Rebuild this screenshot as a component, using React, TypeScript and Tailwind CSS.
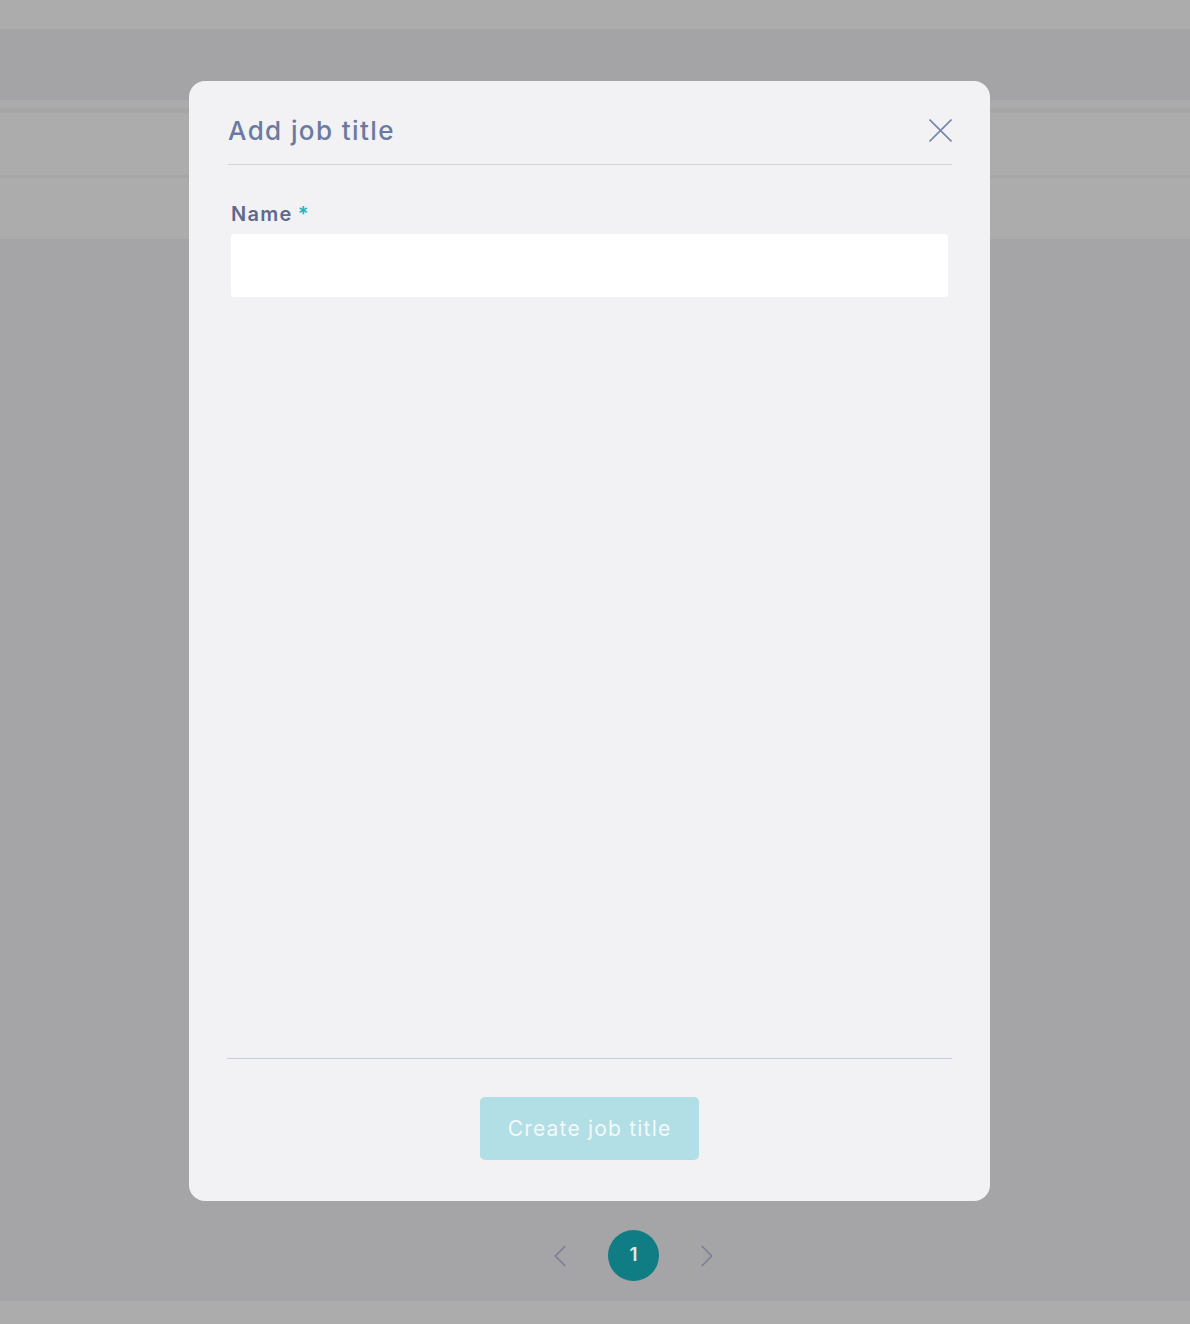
import { ChevronLeft, ChevronRight } from 'lucide-react'

const FONT = { fontFamily: 'Inter, "Open Sans", sans-serif' }

function Pagination() {
  return (
    <div className="flex items-center justify-center gap-[29px] pl-[77px]">
      <ChevronLeft className="h-[38px] w-[38px] text-[#7b7f95]" strokeWidth={1.1} />
      <div className="flex h-[51px] w-[51px] items-center justify-center rounded-full bg-[#107c84] text-[19px] font-semibold text-[#dfe9ea]">
        1
      </div>
      <ChevronRight className="h-[38px] w-[38px] text-[#7b7f95]" strokeWidth={1.1} />
    </div>
  )
}

function CloseIcon() {
  return (
    <svg width="23" height="23" viewBox="0 0 23 23" fill="none" stroke="currentColor" strokeWidth="1.6">
      <path d="M0.5 0.5 L22.5 22.5 M22.5 0.5 L0.5 22.5" />
    </svg>
  )
}

function AddJobTitleModal() {
  return (
    <div className="absolute left-[189px] top-[81px] flex h-[1120px] w-[801px] flex-col rounded-[16px] bg-[#f2f2f4] px-[38px]">
      {/* Header */}
      <div className="ml-[1px] flex h-[84px] items-end justify-between border-b border-[#d2d2da] pb-[14px]">
        <h2 className="text-[26px] font-medium tracking-[1.4px] text-[#6b7aa1]">Add job title</h2>
        <button className="mb-[8px] text-[#7585b0]">
          <CloseIcon />
        </button>
      </div>

      {/* Body */}
      <div className="flex-1 px-[4px] pt-[34px]">
        <label className="block text-[20px] font-semibold tracking-[1.3px] text-[#5f6a8a]">
          Name<span className="ml-[5px] text-[#21b4c0]">*</span>
        </label>
        <input className="mt-[5px] h-[63px] w-[717px] rounded-[3px] bg-white px-3 text-[16px] outline-none" />
      </div>

      {/* Footer */}
      <div className="flex h-[143px] items-start justify-center border-t border-[#c9cde0] pt-[38px]">
        <button className="h-[63px] w-[219px] rounded-[5px] bg-[#b1dfe5] text-[21px] font-normal tracking-[1.2px] text-[#f3f9fa]">
          Create job title
        </button>
      </div>
    </div>
  )
}

export default function App() {
  return (
    <div className="relative h-[1324px] w-full overflow-hidden bg-[#a5a5a7]" style={FONT}>
      <div className="h-[29px] bg-[#acacac]" />
      <div className="h-[71px] bg-[#a4a4a6]" />
      <div className="h-[8px] bg-[#ababab]" />
      <div className="h-[5px] bg-[#a6a6a7]" />
      <div className="h-[62px] bg-[#acacac]" />
      <div className="h-[3px] bg-[#a6a6a7]" />
      <div className="h-[61px] bg-[#acacac]" />
      <div className="h-[991px]" />
      <Pagination />
      <div className="mt-[20px] h-[23px] bg-[#acacac]" />
      <AddJobTitleModal />
    </div>
  )
}
